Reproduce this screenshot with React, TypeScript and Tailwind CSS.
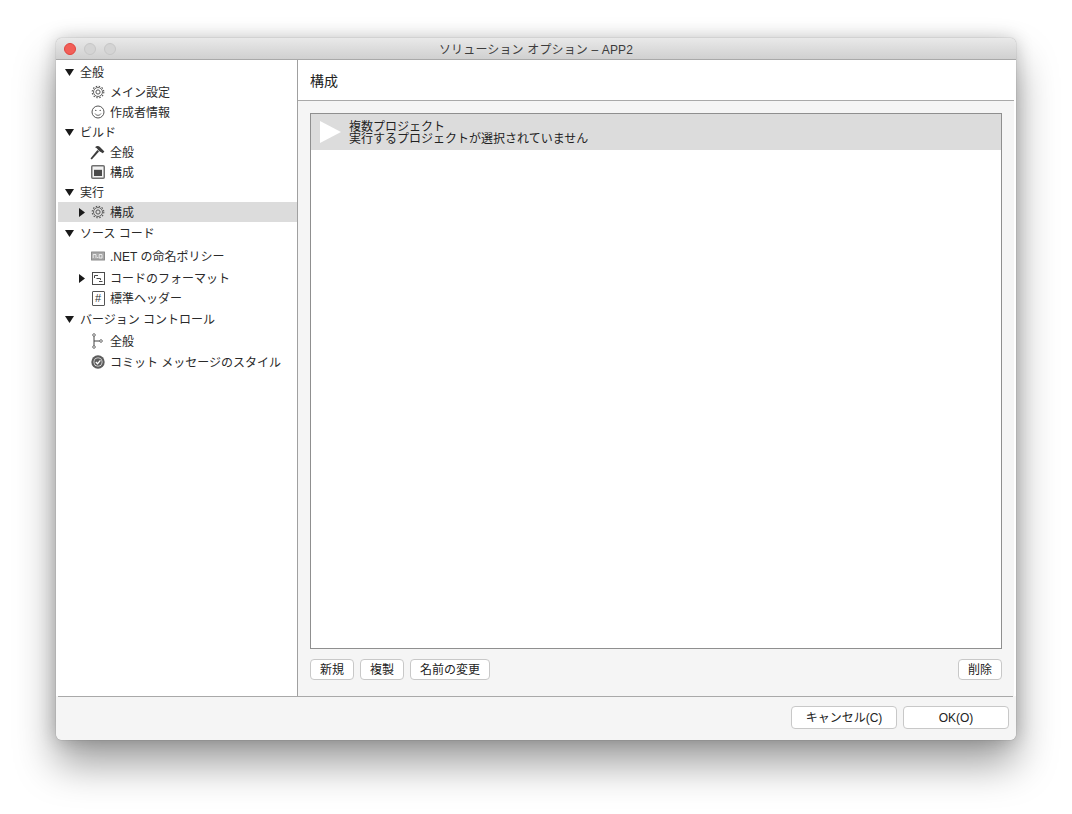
import React from 'react'

const FONT = "font-['Liberation_Sans','Noto_Sans_CJK_JP',sans-serif]"

function GearIcon() {
  return (
    <svg width="14" height="14" viewBox="0 0 14 14" fill="none" stroke="#555">
      <circle cx="7" cy="7" r="5.800" strokeWidth="1.100" strokeDasharray="1.500 1.540" />
      <circle cx="7" cy="7" r="4.500" strokeWidth="0.900" />
      <circle cx="7" cy="7" r="2.100" strokeWidth="1" />
    </svg>
  )
}

function SmileIcon() {
  return (
    <svg width="14" height="14" viewBox="0 0 14 14" fill="none" stroke="#555">
      <circle cx="7" cy="7" r="6" strokeWidth="1" />
      <circle cx="4.800" cy="5.400" r="0.700" fill="#555" stroke="none" />
      <circle cx="9.200" cy="5.400" r="0.700" fill="#555" stroke="none" />
      <path d="M4 8.600c.8 1.200 1.800 1.700 3 1.700s2.200-.5 3-1.700" strokeWidth="0.900" />
    </svg>
  )
}

function HammerIcon() {
  return (
    <svg width="15" height="15" viewBox="0 0 15 15" className="-ml-[1px]">
      <path d="M0.500 13.400 7.400 5 9 6.500 1.800 14.500Z" fill="#3c3c3c" />
      <path d="M5 2.200C7 .3 8.800 .8 10.200 2.200L14.400 6.600 12.800 8.200 9 6 7 3.400C6.400 2.900 5.700 2.500 5 2.200Z" fill="#3c3c3c" />
    </svg>
  )
}

function WindowIcon() {
  return (
    <svg width="14" height="14" viewBox="0 0 14 14" fill="none">
      <rect x="0.750" y="0.750" width="12.500" height="12.500" rx="1" fill="#f2f2f2" stroke="#707070" strokeWidth="1.500" />
      <rect x="3" y="4.800" width="8" height="6.200" fill="#4a4a4a" />
    </svg>
  )
}

function NamingIcon() {
  return (
    <svg width="14" height="10" viewBox="0 0 14 10">
      <rect x="0" y="0.500" width="14" height="9" rx="0.500" fill="#8c8c8c" />
      <rect x="1" y="1.500" width="12" height="7" fill="#a8a8a8" />
      <path d="M2.200 7V3.500H5V7M8.200 3.500H11V7H8.200Z" fill="none" stroke="#f0f0f0" strokeWidth="0.900" />
      <rect x="6.200" y="6" width="1" height="1" fill="#f0f0f0" />
    </svg>
  )
}

function FormatIcon() {
  return (
    <svg width="13" height="13" viewBox="0 0 13 13" fill="none" stroke="#4a4a4a">
      <rect x="0.500" y="0.500" width="12" height="12" strokeWidth="1" />
      <path d="M2.500 3.500H6M4.500 6.500H8.500M7 9.500H10.500M2.500 3.500V6M8.500 6.500V8" strokeWidth="1" />
    </svg>
  )
}

function HashIcon() {
  return (
    <span className="flex h-[15px] w-[13px] items-center justify-center rounded-[1px] border border-[#555] bg-white text-[11px] leading-none text-[#333]">
      #
    </span>
  )
}

function BranchIcon() {
  return (
    <svg width="14" height="16" viewBox="0 0 14 16" fill="none" stroke="#707070" strokeWidth="1">
      <circle cx="3" cy="2" r="1.300" />
      <circle cx="3" cy="14" r="1.300" />
      <circle cx="10" cy="8" r="1.300" />
      <path d="M3 3.300V12.700M3 8H8.700" stroke="#444" />
    </svg>
  )
}

function CheckIcon() {
  return (
    <svg width="14" height="14" viewBox="0 0 14 14" fill="none">
      <circle cx="7" cy="7" r="6.700" fill="#5c5c5c" />
      <circle cx="7" cy="7" r="4.500" fill="#ececec" />
      <circle cx="7" cy="7" r="3.700" fill="#5c5c5c" />
      <path d="M4.800 7 6.500 8.700 9.400 5.300" stroke="#fff" strokeWidth="1.300" />
    </svg>
  )
}

function Caret({ dir }: { dir: 'down' | 'right' }) {
  return dir === 'down' ? (
    <svg width="9" height="7" viewBox="0 0 9 7"><path d="M0 0H9L4.500 7Z" fill="#1a1a1a" /></svg>
  ) : (
    <svg width="6" height="9" viewBox="0 0 6 9"><path d="M0 0V9L6 4.500Z" fill="#1a1a1a" /></svg>
  )
}

type Row = {
  label: string
  h: string
  icon?: React.ReactNode
  caret?: boolean
  selected?: boolean
}

const rows: Row[] = [
  { label: '全般', h: 'h-[20px]' },
  { label: 'メイン設定', h: 'h-[20px]', icon: <GearIcon /> },
  { label: '作成者情報', h: 'h-[20px]', icon: <SmileIcon /> },
  { label: 'ビルド', h: 'h-[20px]' },
  { label: '全般', h: 'h-[20px]', icon: <HammerIcon /> },
  { label: '構成', h: 'h-[20px]', icon: <WindowIcon /> },
  { label: '実行', h: 'h-[20px]' },
  { label: '構成', h: 'h-[20px]', icon: <GearIcon />, caret: true, selected: true },
  { label: 'ソース コード', h: 'h-[22px]' },
  { label: '.NET の命名ポリシー', h: 'h-[24px]', icon: <NamingIcon /> },
  { label: 'コードのフォーマット', h: 'h-[20px]', icon: <FormatIcon />, caret: true },
  { label: '標準ヘッダー', h: 'h-[20px]', icon: <HashIcon /> },
  { label: 'バージョン コントロール', h: 'h-[22px]' },
  { label: '全般', h: 'h-[22px]', icon: <BranchIcon /> },
  { label: 'コミット メッセージのスタイル', h: 'h-[20px]', icon: <CheckIcon /> },
]

function TreeRow({ row }: { row: Row }) {
  if (!row.icon) {
    return (
      <div className={`flex items-center pl-[7px] ${row.h}`}>
        <Caret dir="down" />
        <span className="ml-[6px] mt-[2px]">{row.label}</span>
      </div>
    )
  }
  return (
    <div className={`flex items-center pl-[21px] ${row.h} ${row.selected ? 'bg-[#dcdcdc]' : ''}`}>
      <span className="flex w-[12px] items-center">{row.caret && <Caret dir="right" />}</span>
      <span className="flex w-[14px] items-center justify-center">{row.icon}</span>
      <span className="ml-[5px] mt-[2px] whitespace-nowrap">{row.label}</span>
    </div>
  )
}

function Btn({ w, h, children }: { w: string; h: string; children: React.ReactNode }) {
  return (
    <button
      type="button"
      className={`flex items-center justify-center rounded-[4px] border border-[#c8c8c8] bg-white text-[12px] leading-none text-[#222] ${w} ${h}`}
    >
      {children}
    </button>
  )
}

export default function App() {
  return (
    <div className={`h-[814px] w-[1072px] overflow-hidden bg-white pl-[56px] pt-[38px] ${FONT}`}>
      <div className="flex h-[702px] w-[960px] flex-col overflow-hidden rounded-[6px] bg-[#f5f5f5] shadow-[0_24px_40px_rgba(0,0,0,0.38),0_0_18px_rgba(0,0,0,0.2),0_0_1px_rgba(0,0,0,0.5)]">
        <div className="relative flex h-[22px] shrink-0 items-center border-b border-[#a9a9a9] bg-gradient-to-b from-[#e9e9e9] to-[#d0d0d0]">
          <div className="flex items-center gap-[8px] pl-[8px]">
            <span className="h-[12px] w-[12px] rounded-full border border-[#e0443e] bg-[#f25f58]" />
            <span className="h-[12px] w-[12px] rounded-full border border-[#c6c6c6] bg-[#d4d4d4]" />
            <span className="h-[12px] w-[12px] rounded-full border border-[#c6c6c6] bg-[#d4d4d4]" />
          </div>
          <span className="absolute inset-x-0 mt-[2px] text-center text-[12px] leading-none tracking-[0.15px] text-[#3c3c3c]">
            ソリューション オプション – APP2
          </span>
        </div>

        <div className="flex h-[636px] shrink-0 bg-white px-[2px]">
          <aside className="w-[240px] shrink-0 border-r border-[#a0a0a0] bg-white pt-[2px] text-[12px] leading-none text-[#2a2a2a]">
            {rows.map((row, i) => (
              <TreeRow key={i} row={row} />
            ))}
          </aside>

          <main className="flex min-w-0 flex-1 flex-col bg-[#f5f5f5]">
            <div className="flex h-[41px] shrink-0 items-center border-b border-[#a9a9a9] bg-white pl-[12px] pt-[2px] text-[14px] leading-none text-[#222]">
              構成
            </div>
            <div className="flex flex-1 flex-col px-[12px] pt-[12px]">
              <div className="h-[536px] border border-[#8f8f8f] bg-white">
                <div className="flex h-[36px] items-center bg-[#dcdcdc] pl-[9px]">
                  <svg width="21" height="22" viewBox="0 0 21 22"><path d="M0 0 21 11 0 22Z" fill="#fff" /></svg>
                  <div className="ml-[8px] mt-[2px] text-[12px] leading-[12px] text-[#222]">
                    <div>複数プロジェクト</div>
                    <div>実行するプロジェクトが選択されていません</div>
                  </div>
                </div>
              </div>
              <div className="mt-[10px] flex gap-[6px]">
                <Btn w="w-[44px]" h="h-[21px]">新規</Btn>
                <Btn w="w-[44px]" h="h-[21px]">複製</Btn>
                <Btn w="w-[80px]" h="h-[21px]">名前の変更</Btn>
                <div className="ml-auto">
                  <Btn w="w-[44px]" h="h-[21px]">削除</Btn>
                </div>
              </div>
            </div>
          </main>
        </div>

        <div className="flex flex-1 flex-col bg-[#f5f5f5]">
          <div className="ml-[2px] mr-[3px] h-px bg-[#a9a9a9]" />
          <div className="flex justify-end gap-[6px] pr-[7px] pt-[9px]">
            <Btn w="w-[106px]" h="h-[23px]">キャンセル(C)</Btn>
            <Btn w="w-[106px]" h="h-[23px]">OK(O)</Btn>
          </div>
        </div>
      </div>
    </div>
  )
}
